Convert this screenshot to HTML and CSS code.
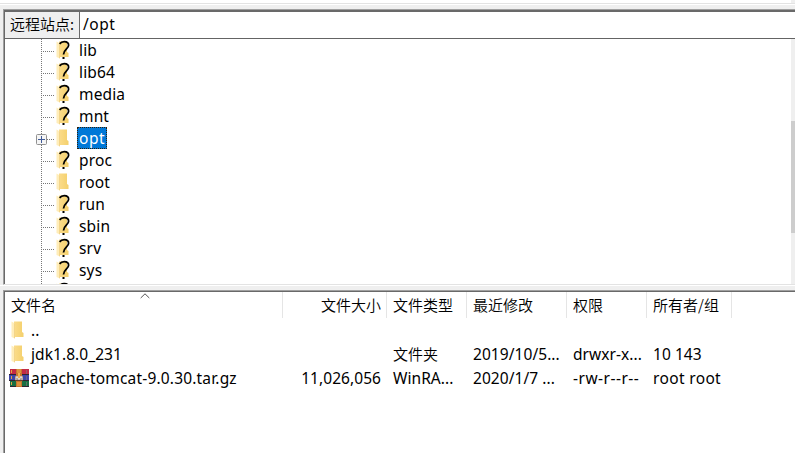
FILE: index.html
```
<!DOCTYPE html>
<html lang="zh-CN">
<head>
<meta charset="utf-8">
<title>/opt</title>
<link rel="stylesheet" href="styles.css">
</head>
<body>
<svg class="defs" width="0" height="0">
  <defs>
    <linearGradient id="face" x1="0" x2="1"><stop offset="0" stop-color="#fbdc8b"/><stop offset="1" stop-color="#f4d06c"/></linearGradient>
    <symbol id="folder" viewBox="0 0 14 20">
      <path d="M3 1.5H11V12L12.5 13V17H3Z" fill="url(#face)"/>
      <path d="M.5 1.5L4 3.5V18.5L.5 17Z" fill="#ffedb9"/>
      <path d="M4 3.5V18.5L3 18V3Z" fill="#f3d58a"/>
    </symbol>
    <symbol id="unknown" viewBox="0 0 14 20">
      <use href="#folder" width="14" height="20"/>
      <path d="M3.6 3.9C4.8 2.3 6.6 1.7 8.2 1.7C11 1.7 12.6 3.2 12.6 5.3C12.6 9 7.5 9.6 7.5 14.5" fill="none" stroke="#000" stroke-width="1.8"/>
      <rect x="6.5" y="17" width="2" height="2"/>
    </symbol>
    <symbol id="archive" viewBox="0 0 20 18">
      <rect x="1" width="19" height="6" fill="#c42b45"/><rect y="6" width="20" height="6" fill="#3d46a8"/><rect x="1" y="12" width="19" height="6" fill="#187044"/>
      <path d="M0 5.5H20M0 11.5H20M1 17.5H20" stroke="#302332"/>
      <path d="M2.5 1V4M2.5 7V10M2.5 13V16" stroke="#e3a340"/>
      <path d="M17.5 1V5M17.5 7V11M17.5 13V17" stroke="#85747d" opacity=".6"/>
      <rect x="7" width="6" height="18" fill="#c8752c"/>
      <path d="M8 1H12M8 3H12M8 14H12M8 16H12" stroke="#efb151"/>
      <rect x="6" y="7" width="8" height="5" fill="#65402f"/>
      <path d="M7 11V8H9V10H11V8H13V11" fill="none" stroke="#eee7df" stroke-width="1.3"/>
      <rect x="9" y="4" width="2" height="5" fill="#f0b453"/>
    </symbol>
  </defs>
</svg>
<main class="window">
  <div class="strip"><i></i></div>
  <section class="remote">
    <div class="address"><label class="cjk">远程站点:</label><span class="path">/opt</span></div>
    <div class="tree-area">
      <div class="tree">
        <div class="node"><svg class="icon"><use href="#unknown"/></svg><span>lib</span></div>
        <div class="node"><svg class="icon"><use href="#unknown"/></svg><span>lib64</span></div>
        <div class="node"><svg class="icon"><use href="#unknown"/></svg><span>media</span></div>
        <div class="node"><svg class="icon"><use href="#unknown"/></svg><span>mnt</span></div>
        <div class="node selected"><svg class="plus" viewBox="0 0 11 11"><rect x=".5" y=".5" width="10" height="10" rx="1" fill="#f5f5f5" stroke="#919191"/><path d="M2 5.5H9M5.5 2V9" stroke="#405b98"/></svg><svg class="icon"><use href="#folder"/></svg><span>opt</span></div>
        <div class="node"><svg class="icon"><use href="#unknown"/></svg><span>proc</span></div>
        <div class="node"><svg class="icon"><use href="#folder"/></svg><span>root</span></div>
        <div class="node"><svg class="icon"><use href="#unknown"/></svg><span>run</span></div>
        <div class="node"><svg class="icon"><use href="#unknown"/></svg><span>sbin</span></div>
        <div class="node"><svg class="icon"><use href="#unknown"/></svg><span>srv</span></div>
        <div class="node"><svg class="icon"><use href="#unknown"/></svg><span>sys</span></div>
        <div class="node"><svg class="icon"><use href="#unknown"/></svg></div>
      </div>
      <div class="scrollbar"><div class="thumb"></div></div>
    </div>
  </section>
  <div class="splitter"></div>
  <section class="files">
    <div class="row head cjk">
      <div class="cell">文件名<svg class="sort" viewBox="0 0 10 6"><path d="M.7 5L5 .8L9.3 5" fill="none" stroke="#555"/></svg></div>
      <div class="cell size">文件大小</div><div class="cell">文件类型</div><div class="cell">最近修改</div><div class="cell">权限</div><div class="cell">所有者/组</div>
    </div>
    <div class="row"><div class="cell name"><svg class="icon"><use href="#folder"/></svg><span>..</span></div></div>
    <div class="row"><div class="cell name"><svg class="icon"><use href="#folder"/></svg><span>jdk1.8.0_231</span></div><div class="cell"></div><div class="cell cjk">文件夹</div><div class="cell">2019/10/5...</div><div class="cell">drwxr-x...</div><div class="cell">10 143</div></div>
    <div class="row"><div class="cell name"><svg class="rar"><use href="#archive"/></svg><span class="tomcat">apache-tomcat-9.0.30.tar.gz</span></div><div class="cell size">11,026,056</div><div class="cell">WinRA...</div><div class="cell">2020/1/7 ...</div><div class="cell perms">-rw-r--r--</div><div class="cell owner">root root</div></div>
  </section>
</main>
</body>
</html>
```
FILE: styles.css
```
* { box-sizing: border-box; }
body { margin: 0; background: #efefef; color: #000; font: 15.5px/22px "Noto Sans", "Noto Sans CJK SC", sans-serif; overflow: hidden; }
.defs { position: absolute; }
.window { width: 795px; height: 453px; display: flex; flex-direction: column; }
.cjk { font-family: "Noto Sans CJK SC", "Noto Sans", sans-serif; font-size: 15px; font-weight: 350; }
.strip { height: 9px; background: linear-gradient(#fff 3px, #e3e3e3 3px 4px, #fff 4px 5px, #efefef 5px); display: flex; justify-content: flex-end; }
.strip i { width: 4px; height: 3px; background: #efefef; }
.remote { height: 276px; margin-left: 3px; border-left: 1px solid #a0a0a0; border-top: 1px solid #a0a0a0; border-bottom: 1px solid #e3e3e3; display: flex; flex-direction: column; }
.address { height: 29px; border-top: 2px solid #696969; border-bottom: 1px solid #646464; border-left: 1px solid #696969; display: flex; line-height: 24px; background: #fff; }
.address label { width: 75px; padding-left: 5px; background: #efefef; border-right: 1px solid #696969; white-space: nowrap; line-height: 23px; }
.path { padding-left: 3px; letter-spacing: .5px; }
.tree-area { flex: 1; min-height: 0; display: flex; background: #fff; border-left: 1px solid #696969; }
.tree { flex: 1; overflow: hidden; padding-left: 36px; background: repeating-linear-gradient(#777 0 1px, transparent 1px 2px) 36px 0 / 1px 100% no-repeat; }
.node { height: 22px; display: flex; padding-left: 15px; background: repeating-linear-gradient(90deg, #777 0 1px, transparent 1px 2px) 2px 12px / 11px 1px no-repeat; position: relative; letter-spacing: .15px; }
.icon { width: 14px; height: 20px; flex: none; display: block; }
.node .icon { margin-top: 1px; }
.node span { margin-left: 7px; padding: 0 2px; height: 22px; line-height: 22px; }
.selected span { background: #0078d7; color: #fff; outline: 1px dotted #30200b; outline-offset: -1px; width: 30px; letter-spacing: .5px; }
.plus { position: absolute; left: -5px; top: 7px; width: 11px; height: 11px; }
.scrollbar { width: 4px; background: #efefef; padding-top: 82px; }
.thumb { height: 112px; background: #cdcdcd; }
.splitter { height: 5px; background: linear-gradient(#fff 1px, #efefef 1px); }
.files { flex: 1; margin-left: 3px; border: solid #a0a0a0; border-width: 1px 0 0 1px; background: #fff; box-shadow: inset 1px 1px #696969; padding: 2px 0 0 1px; }
.row { display: grid; grid-template-columns: 278px 104px 80px 100px 80px 85px; height: 24px; line-height: 25px; letter-spacing: .06px; }
.row .cjk { line-height: 23px; }
.cell { padding-left: 6px; white-space: nowrap; position: relative; }
.head { height: 26px; line-height: 26px; margin-top: -1px; letter-spacing: 0; }
.head .cell { border-right: 1px solid #e5e5e5; }
.size { text-align: right; padding-right: 6px; }
.head .size { padding-right: 5px; }
.sort { position: absolute; width: 10px; height: 6px; left: 135px; top: 1px; }
.name { display: flex; padding-left: 6px; }
.name .icon { margin-top: 2px; }
.name span { margin-left: 6px; }
.rar { width: 20px; height: 18px; margin: 3px 0 0 -2px; flex: none; }
.name .tomcat { margin-left: 2px; letter-spacing: .18px; }
.perms { letter-spacing: .5px; }
.owner { letter-spacing: .35px; }
```
